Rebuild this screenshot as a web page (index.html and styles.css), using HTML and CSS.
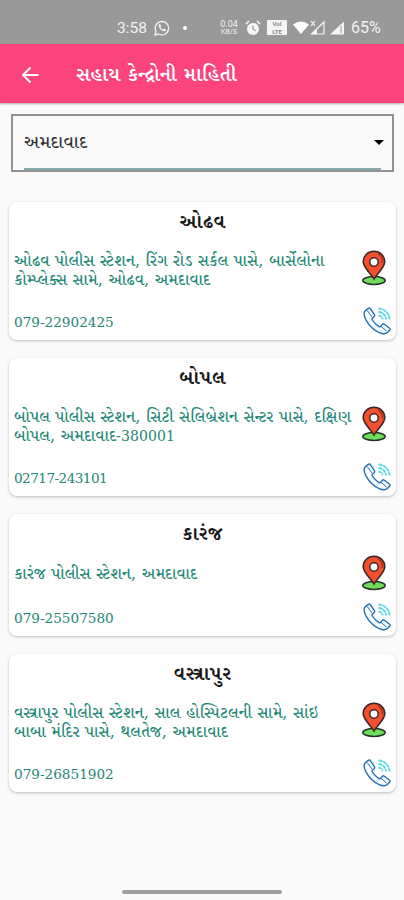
FILE: index.html
```
<!DOCTYPE html>
<html lang="gu">
<head>
<meta charset="utf-8">
<title>સહાય કેન્દ્રોની માહિતી</title>
<link rel="stylesheet" href="styles.css">
</head>
<body>
<svg class="defs" aria-hidden="true">
  <symbol id="pin" viewBox="0 0 26 36">
    <ellipse cx="13" cy="30.500" rx="11.200" ry="4" fill="#6fdc5c" stroke="#26332a" stroke-width="1.500"/>
    <path d="M13 29C10.500 24 2.200 18 2.200 11.600a10.800 10.400 0 0 1 21.600 0C23.800 18 15.500 24 13 29Z" fill="#f4502f" stroke="#3b2925" stroke-width="1.600"/>
    <path d="M17 3.800c3.500 1.700 5 5 4.200 9" fill="none" stroke="#a83224" stroke-width="1.600"/>
    <circle cx="13" cy="12" r="4.200" fill="#fff" stroke="#3b2925" stroke-width="1.500"/>
  </symbol>
  <symbol id="phone" viewBox="0 0 28 28">
    <path d="M5.300 1.400 2.500 3.600C.6 5.500 1.100 9.600 3.200 13.300c3 5.300 7.500 9.800 13 12.300 3.500 1.500 6.500 1.500 8.500-.3l2-2.300c.5-.7.400-1.500-.3-2l-5-3.800c-.7-.5-1.500-.4-2.100.2l-1.600 1.900c-.6.600-1.300.6-2 .1-2.700-1.700-4.700-3.800-6.300-6.400-.5-.8-.4-1.500.2-2l1.500-1.300c.6-.6.700-1.300.3-2L7.500 1.800c-.5-.8-1.400-.9-2.200-.4Z" fill="#f5fbff" stroke="#246fb4" stroke-width="1.400"/>
    <path d="m4.300 3.700 4.900 6.500M17.600 19l6 5" fill="none" stroke="#246fb4" stroke-width="1"/>
    <path d="M15.500 1.500c6 .2 10.700 4.700 11 11M15.500 5c4.200.2 7.300 3.300 7.500 7.500M15.500 8.500c2.400.1 3.900 1.700 4 4" fill="none" stroke="#58dbe9" stroke-width="1.800" stroke-dasharray="4 .5"/>
  </symbol>
</svg>
<header class="status">
  <span class="time">3:58</span>
  <svg class="whatsapp" viewBox="0 0 16 16"><path d="m1 15 1-3.700A6.700 6.700 0 1 1 4.600 14Z" fill="none" stroke="#f2f2f2" stroke-width="1.300"/><path d="M5.200 4.300c-2.200 1.900 2.800 8.300 6 6.600.8-.5.700-1.300.5-1.600l-1.800-.9-1 1C7.600 8.900 6.800 8 6.400 7l.8-.9-.8-1.900Z" fill="#f2f2f2"/></svg>
  <i class="dot"></i>
  <span class="rate"><b>0.04</b><b class="unit">KB/S</b></span>
  <svg class="alarm" viewBox="0 0 16 16"><circle cx="8" cy="9" r="6" fill="#f6f6f6"/><path d="m1 4 3-3m8 0 3 3" stroke="#f6f6f6" stroke-width="1.500"/><path d="M8 5.500V9l2.700 1.700" fill="none" stroke="#999" stroke-width="1.200"/></svg>
  <span class="volte"><b>VoI</b><b>LTE</b></span>
  <svg class="signals" viewBox="0 0 52 16"><path d="M0 4.500q8-6 16 0L8 14Z" fill="#fff"/><path d="m18 1 4 5m0-5-4 5M18.500 14H31V2Z" fill="none" stroke="#f6f6f6" stroke-width="1.200"/><path d="M24 9v5h-5ZM37 14.500h14v-13Z" fill="#f6f6f6"/><path d="M48 6v7" stroke="#999" stroke-width="1"/></svg>
  <span class="battery">65%</span>
</header>
<div class="appbar">
  <svg class="back" viewBox="0 0 18 18"><path d="M17.500 9H2m7.500-7.500L2 9l7.500 7.500" fill="none" stroke="#fff" stroke-width="2"/></svg>
  <h1>સહાય કેન્દ્રોની માહિતી</h1>
</div>
<main>
  <div class="select"><div class="field"><span class="city">અમદાવાદ</span><i class="caret"></i></div></div>
  <section class="card">
    <h2>ઓઢવ</h2>
    <div class="row address"><p><span>ઓઢવ પોલીસ સ્ટેશન, રિંગ રોડ સર્કલ પાસે, બાર્સેલોના</span><span>કોમ્પ્લેક્સ સામે, ઓઢવ, અમદાવાદ</span></p><svg class="pin"><use href="#pin"/></svg></div>
    <div class="row call"><span class="number">079-22902425</span><svg class="phone"><use href="#phone"/></svg></div>
  </section>
  <section class="card">
    <h2>બોપલ</h2>
    <div class="row address"><p><span>બોપલ પોલીસ સ્ટેશન, સિટી સેલિબ્રેશન સેન્ટર પાસે, દક્ષિણ</span><span>બોપલ, અમદાવાદ<b>-380001</b></span></p><svg class="pin"><use href="#pin"/></svg></div>
    <div class="row call"><span class="number narrow">02717-243101</span><svg class="phone"><use href="#phone"/></svg></div>
  </section>
  <section class="card short">
    <h2>કારંજ</h2>
    <div class="row address"><p><span>કારંજ પોલીસ સ્ટેશન, અમદાવાદ</span></p><svg class="pin"><use href="#pin"/></svg></div>
    <div class="row call"><span class="number">079-25507580</span><svg class="phone"><use href="#phone"/></svg></div>
  </section>
  <section class="card">
    <h2>વસ્ત્રાપુર</h2>
    <div class="row address"><p><span>વસ્ત્રાપુર પોલીસ સ્ટેશન, સાલ હોસ્પિટલની સામે, સાંઇ</span><span>બાબા મંદિર પાસે, થલતેજ, અમદાવાદ</span></p><svg class="pin"><use href="#pin"/></svg></div>
    <div class="row call"><span class="number">079-26851902</span><svg class="phone"><use href="#phone"/></svg></div>
  </section>
</main>
<footer><i></i></footer>
</body>
</html>
```
FILE: styles.css
```
* { box-sizing: border-box; }
body { margin: 0; height: 900px; background: #fafafa; display: flex; flex-direction: column; overflow: hidden; font-family: "DejaVu Serif", "Noto Serif Gujarati", "Noto Sans Gujarati", serif; }
.defs { display: none; }
svg { flex: none; display: block; }
.status { height: 44px; background: #999; color: #f2f2f2; display: flex; align-items: center; padding: 11px 0 0 117px; font-family: Roboto, sans-serif; flex: none; white-space: nowrap; }
.time { width: 30px; font-size: 15.5px; }
.whatsapp { width: 16px; height: 16px; margin-left: 7px; }
.dot { width: 4px; height: 4px; border-radius: 50%; background: #fff; margin-left: 13px; }
.rate { display: flex; flex-direction: column; width: 20px; margin-left: 32px; align-items: center; }
.rate b { font-size: 9px; line-height: 9px; font-weight: 400; }
.rate .unit { font-size: 7px; line-height: 7px; }
.alarm { width: 16px; height: 16px; margin-left: 6px; }
.volte { width: 20px; height: 15px; margin-left: 6px; background: #f4f4f4; color: #888; display: flex; flex-direction: column; align-items: center; border-radius: 1px; }
.volte b { font-size: 6px; line-height: 7.5px; }
.signals { width: 52px; height: 16px; margin-left: 6px; }
.battery { font-size: 16px; margin-left: 6px; }
.appbar { height: 59px; flex: none; background: #fb437e; color: #fff; display: flex; align-items: center; padding-left: 21px; box-shadow: 0 1px 2px #aaa; }
.back { width: 18px; height: 18px; margin-top: 2px; }
h1 { margin: 1px 0 0 37px; font-size: 20px; letter-spacing: .2px; font-weight: 600; line-height: 26px; white-space: nowrap; }
main { flex: 1; padding: 11px 8px 0 9px; }
.select { height: 58px; margin: 0 2px 30px; border: 2px solid #929292; padding: 0 11px; display: flex; }
.field { flex: 1; display: flex; align-items: center; justify-content: space-between; border-bottom: 2px solid #83aaaa; height: 54px; }
.city { font-size: 18px; line-height: 24px; letter-spacing: .5px; font-weight: 500; color: #333; }
.caret { border: 5px solid transparent; border-top-color: #000; border-bottom: 0; margin-right: -3px; }
.card { height: 138px; background: #fff; border-radius: 8px; box-shadow: 0 1px 3px rgba(0,0,0,.24); margin-bottom: 18px; padding: 4px 5px 0; display: flex; flex-direction: column; }
.short { height: 122px; }
h2 { margin: 0; font-size: 19px; letter-spacing: .6px; line-height: 30px; height: 30px; font-weight: 700; color: #181818; text-align: center; }
.row { display: flex; justify-content: space-between; color: #248777; white-space: nowrap; }
.address { height: 71px; padding: 14px 4px 0 0; }
.short .address { height: 55px; padding-top: 7px; }
p { margin: 1px 0 0; font-size: 16px; letter-spacing: .28px; font-weight: 500; line-height: 19px; }
.short p { padding-top: 8px; }
p span { display: block; width: max-content; height: 19px; }
p b { font-size: 14px; font-weight: 400; letter-spacing: .1px; }
.pin { width: 26px; height: 36px; }
.call { align-items: center; height: 28px; }
.number { font-size: 13.6px; padding-top: 1px; }
.narrow { letter-spacing: -.55px; }
.phone { width: 28px; height: 28px; }
footer { height: 12px; display: flex; justify-content: center; align-items: flex-start; }
footer i { width: 160px; height: 4px; border-radius: 2px; background: #a0a0a0; margin-top: 2px; }
```
